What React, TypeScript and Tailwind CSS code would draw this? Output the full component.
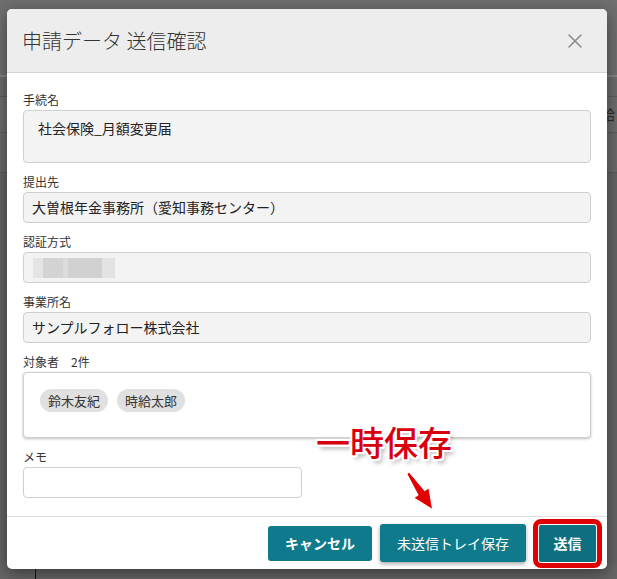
import React from 'react'
import { X } from 'lucide-react'

const JP = "font-['Noto_Sans_CJK_JP','Noto_Sans',sans-serif]"

// read-only field used throughout the confirm dialog
function Field({
  label,
  className,
  children,
}: {
  label: string
  className: string
  children?: React.ReactNode
}) {
  return (
    <div>
      <div className="h-[18px] text-[12px] leading-[18px] text-[#333]">{label}</div>
      <div
        className={`mt-[1px] rounded-[4px] border border-[#cfcfcf] bg-[#f4f3f4] text-[14px] text-[#222] ${className}`}
      >
        {children}
      </div>
    </div>
  )
}

function Chip({ name }: { name: string }) {
  return (
    <span className="flex h-[23px] items-center rounded-full bg-[#e0e0e0] px-[8px] text-[13px] text-[#333]">
      {name}
    </span>
  )
}

export default function App() {
  return (
    <div className={`relative h-[579px] w-[617px] overflow-hidden bg-[#666] ${JP}`}>
      {/* dimmed page behind the dialog */}
      <div className="flex flex-col">
        <div className="h-[77px] border-b-2 border-[#858585] bg-[#6f6f6f]" />
        <div className="h-[20px] border-b border-[#5d5d5d] bg-[#6c6c6c]" />
        <div className="flex h-[36px] items-center justify-end border-b border-[#5a5a5a] bg-[#6d6d6d] pr-[2px] text-[14px] text-[#2a2a2a]">
          給
        </div>
        <div className="h-[40px] border-b border-[#5a5a5a] bg-[#6a6a6a]" />
        <div className="h-[392px] bg-[#646464]" />
        <div className="ml-[35px] h-[20px] w-[1px] bg-[#111]" />
      </div>

      {/* dialog */}
      <div className="absolute left-[7px] top-[9px] flex h-[560px] w-[600px] flex-col overflow-hidden rounded-[5px] bg-white shadow-[0_4px_16px_rgba(0,0,0,0.45)]">
        <div className="flex h-[64px] shrink-0 items-center justify-between border-b border-[#d4d4d4] bg-[#ededed] pl-[15px] pr-[20px]">
          <div className="text-[20px] font-light text-[#333]">申請データ 送信確認</div>
          <X size={24} strokeWidth={1.6} className="text-[#8c8c8c]" />
        </div>

        <div className="flex flex-1 flex-col gap-[10px] px-[16px] pt-[18px]">
          <Field label="手続名" className="h-[53px] pl-[14px] pt-[7px]">
            社会保険_月額変更届
          </Field>
          <Field label="提出先" className="flex h-[31px] items-center pl-[8px]">
            大曽根年金事務所（愛知事務センター）
          </Field>
          <Field label="認証方式" className="flex h-[31px] items-center pl-[9px]">
            <div className="flex h-[20px]">
              <div className="w-[10px] bg-[#e4e4e4]" />
              <div className="w-[20px] bg-[#d3d3d3]" />
              <div className="w-[5px] bg-[#dcdcdc]" />
              <div className="w-[34px] bg-[#d1d1d1]" />
              <div className="w-[13px] bg-[#e3e3e3]" />
            </div>
          </Field>
          <Field label="事業所名" className="flex h-[31px] items-center pl-[8px]">
            サンプルフォロー株式会社
          </Field>
          <div>
            <div className="h-[18px] text-[12px] leading-[18px] text-[#333]">対象者　2件</div>
            <div className="mt-[1px] flex h-[66px] items-start gap-[9px] rounded-[4px] border border-[#cfcfcf] bg-white pl-[16px] pt-[16px] shadow-[0_1px_3px_rgba(0,0,0,0.25)]">
              <Chip name="鈴木友紀" />
              <Chip name="時給太郎" />
            </div>
          </div>
          <div>
            <div className="h-[18px] text-[12px] leading-[18px] text-[#333]">メモ</div>
            <div className="mt-[1px] h-[31px] w-[279px] rounded-[4px] border border-[#cfcfcf] bg-white" />
          </div>
        </div>

        <div className="flex h-[53px] shrink-0 items-center justify-end border-t border-[#dedede] pr-[11px]">
          <button className="h-[35px] w-[104px] rounded-[3px] bg-[#0f7a8b] text-[14px] font-bold text-white">
            キャンセル
          </button>
          <button className="ml-[8px] h-[38px] w-[146px] rounded-[3px] bg-[#0f7a8b] text-[14px] text-white shadow-[0_2px_4px_rgba(0,0,0,0.35)]">
            未送信トレイ保存
          </button>
          <button className="ml-[13px] h-[37px] w-[57px] rounded-[2px] bg-[#0e6f80] text-[14px] font-bold text-white outline-[5px] outline-offset-[1px] outline-[#e10000] [outline-style:solid]">
            送信
          </button>
        </div>
      </div>

      {/* annotation */}
      <div className="absolute left-[316px] top-[422px] text-[34px] font-medium leading-[40px] text-[#d8000f] [text-shadow:2px_2px_0_#fff,-2px_-2px_0_#fff,2px_-2px_0_#fff,-2px_2px_0_#fff,0_2px_0_#fff,0_-2px_0_#fff,2px_0_0_#fff,-2px_0_0_#fff,3px_4px_4px_rgba(0,0,0,0.35)]">
        一時保存
      </div>
      <svg
        className="absolute left-[401px] top-[470px]"
        width="42"
        height="46"
        viewBox="0 0 42 46"
      >
        <polygon
          points="8.2,2.2 23.7,20.7 27.9,17.9 31.6,39.5 12.9,27.9 17.1,25.1 5.8,3.8"
          fill="#e00000"
          stroke="#fff"
          strokeWidth="1"
          strokeLinejoin="round"
        />
      </svg>
    </div>
  )
}
